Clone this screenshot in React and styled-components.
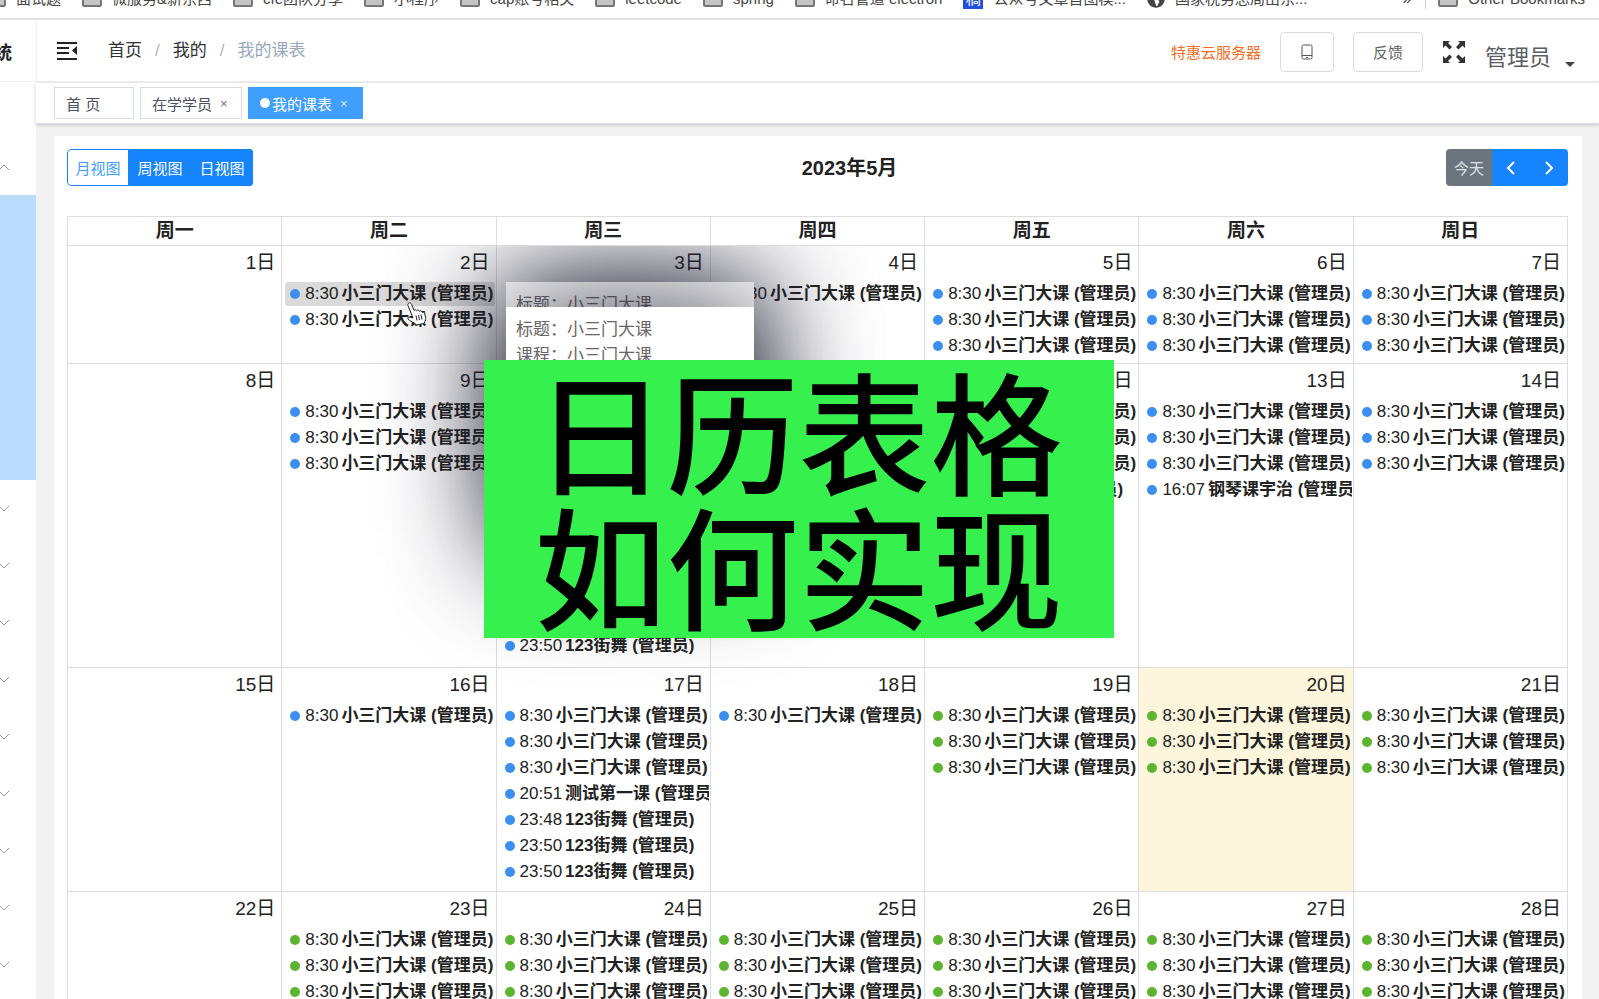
import React from 'react';
import styled, { createGlobalStyle, css } from 'styled-components';
import { FaGlobeAmericas } from 'react-icons/fa';

const SAN = { time: '8:30', title: '小三门大课 (管理员)' };
const PIANO = { time: '16:07', title: '钢琴课宇治 (管理员)' };
const TEST = { time: '20:51', title: '测试第一课 (管理员)' };
const DANCE48 = { time: '23:48', title: '123街舞 (管理员)' };
const DANCE50 = { time: '23:50', title: '123街舞 (管理员)' };

const THREE = [SAN, SAN, SAN];
const WED = [...THREE, TEST, DANCE48, DANCE50, DANCE50];

const weekdays = ['周一', '周二', '周三', '周四', '周五', '周六', '周日'];

const weeks = [
  {
    height: 118,
    start: 1,
    days: [[], [SAN, SAN], [], [SAN], THREE, THREE, THREE],
  },
  {
    height: 304,
    start: 8,
    days: [
      [],
      THREE,
      [...THREE, TEST, TEST, ...Array(2).fill(DANCE48), ...Array(3).fill(DANCE50)],
      [SAN],
      [...THREE, DANCE50],
      [...THREE, PIANO],
      THREE,
    ],
  },
  {
    height: 224,
    start: 15,
    days: [[], [SAN], WED, [SAN], THREE, THREE, THREE],
  },
  {
    height: 224,
    start: 22,
    days: [[], THREE, THREE, THREE, THREE, THREE, THREE],
  },
];

const TODAY = 20;
const FIRST_OPEN = 19;

const bookmarks = [
  '面试题',
  '微服务&新东西',
  'cfe团队分享',
  '小程序',
  'cap账号相关',
  'leetcode',
  'spring',
  '命名管道 electron',
];

const FoldIcon = () => (
  <svg width="20" height="20" viewBox="0 0 20 20" fill="#222">
    <path d="M0 1h20v2H0zM0 6h12v2H0zM0 11h12v2H0zM0 17h20v2H0zM20 5v9l-5-4.500z" />
  </svg>
);

const PhoneIcon = () => (
  <svg width="12" height="16" viewBox="0 0 12 16" fill="none" stroke="#555">
    <rect x="1" y="1" width="10" height="14" rx="1.500" />
    <path d="M1 11.500h10M5 13.500h2" />
  </svg>
);

const FullIcon = () => (
  <svg width="24" height="24" viewBox="0 0 24 24" fill="#333">
    <path d="M1 1h7L6 3l4 4-2.500 2.500-4-4L1 8z" />
    <path d="M23 1v7l-2.500-2.500-4 4L14 7l4-4-2-2z" />
    <path d="M1 23v-7l2.500 2.500 4-4L10 17l-4 4 2 2z" />
    <path d="M23 23h-7l2-2-4-4 2.500-2.500 4 4L23 16z" />
  </svg>
);

const ArrowIcon = ({ d }) => (
  <svg width="10" height="16" viewBox="0 0 10 16" fill="none" stroke="#fff" strokeWidth="2">
    <path d={d} />
  </svg>
);

const FoldChevron = ({ open }) => (
  <svg width="12" height="8" viewBox="0 0 12 8" fill="none" stroke="#999">
    <path d={open ? 'M1 7l5-5 5 5' : 'M1 1l5 5 5-5'} />
  </svg>
);

const HandCursor = () => (
  <svg width="20" height="24" viewBox="0 0 20 24" fill="#fff" stroke="#222" strokeLinejoin="round">
    <path d="M2 1c1.200-.5 2 .2 2.500 1.300L7 8.500c.8-1 2.200-.8 2.700.2 1-.9 2.300-.5 2.700.5 1.200-.7 2.600 0 3 1.200.9-.3 2 .1 2.300 1.200l.8 3.400c.3 2-.2 3.500-.8 5l-.7 1.500-8 1.500-1.500-2c-2-.8-4.500-2-6.500-4-.8-1.300.6-2.400 2-1.900l3 .9L1 3.500C.6 2.300 1 1.300 2 1z" />
    <path d="M9 13.500l1 5M11.500 13l1 5M14 12.500l1 5" />
  </svg>
);

const Day = ({ day, events }) => (
  <DayCell $today={day === TODAY}>
    <DayNumber href="#day">{day}日</DayNumber>
    <EventList>
      {events.map((ev, i) => (
        <li key={i}>
          <EventLink href="#event" $active={day === 2 && i === 0}>
            <Dot $open={day >= FIRST_OPEN} />
            <time>{ev.time}</time>
            <b>{ev.title}</b>
          </EventLink>
        </li>
      ))}
    </EventList>
  </DayCell>
);

const App = () => (
  <Page>
    <GlobalStyle />
    <BookmarkBar>
      {bookmarks.map(name => (
        <Bookmark href="#bookmark" key={name}>
          <FolderShape />
          {name}
        </Bookmark>
      ))}
      <Bookmark href="#bookmark">
        <BlueLogo>稿</BlueLogo>
        公众号文章首图模...
      </Bookmark>
      <Bookmark href="#bookmark">
        <FaGlobeAmericas size={18} />
        国家税务总局山东...
      </Bookmark>
      <BookmarkEnd>
        <span>»</span>
        <OtherBookmarks href="#bookmark">
          <FolderShape />
          Other Bookmarks
        </OtherBookmarks>
      </BookmarkEnd>
    </BookmarkBar>
    <Body>
      <Sidebar>
        <SideTitle>统</SideTitle>
        <SideItem $gap>
          <FoldChevron open />
        </SideItem>
        <SideActive />
        {Array.from({ length: 9 }, (_, i) => (
          <SideItem key={i}>
            <FoldChevron />
          </SideItem>
        ))}
      </Sidebar>
      <Main>
        <Header>
          <PlainButton aria-label="fold">
            <FoldIcon />
          </PlainButton>
          <Crumbs>
            <a href="#home">首页</a>
            <Slash>/</Slash>
            <a href="#mine">我的</a>
            <Slash>/</Slash>
            <Current>我的课表</Current>
          </Crumbs>
          <Tools>
            <Promo href="#cloud">特惠云服务器</Promo>
            <ToolButton $width={54} aria-label="phone">
              <PhoneIcon />
            </ToolButton>
            <ToolButton $width={70}>反馈</ToolButton>
            <PlainButton aria-label="fullscreen">
              <FullIcon />
            </PlainButton>
            <UserButton>
              管理员
              <Caret />
            </UserButton>
          </Tools>
        </Header>
        <Tabs>
          <Tab href="#home" $width={80}>
            首 页
          </Tab>
          <Tab href="#students" $width={102}>
            在学学员 <small>×</small>
          </Tab>
          <Tab href="#schedule" $width={115} $active>
            <TabDot />
            我的课表 <small>×</small>
          </Tab>
        </Tabs>
        <Content>
          <Card>
            <Toolbar>
              <Group>
                <ViewButton $active>月视图</ViewButton>
                <ViewButton>周视图</ViewButton>
                <ViewButton>日视图</ViewButton>
              </Group>
              <Title>2023年5月</Title>
              <Group>
                <TodayButton>今天</TodayButton>
                <NavButton aria-label="prev">
                  <ArrowIcon d="M8 2L2 8l6 6" />
                </NavButton>
                <NavButton aria-label="next">
                  <ArrowIcon d="M2 2l6 6-6 6" />
                </NavButton>
              </Group>
            </Toolbar>
            <CalendarWrap>
              <Calendar>
                <thead>
                  <tr>
                    {weekdays.map(name => (
                      <HeadCell key={name}>{name}</HeadCell>
                    ))}
                  </tr>
                </thead>
                <tbody>
                  {weeks.map(week => (
                    <WeekRow key={week.start} $height={week.height}>
                      {week.days.map((events, i) => (
                        <Day key={i} day={week.start + i} events={events} />
                      ))}
                    </WeekRow>
                  ))}
                </tbody>
              </Calendar>
              <PopLayer>
                <Popover $top={36}>
                  <p>标题：小三门大课</p>
                </Popover>
                <Popover $top={61}>
                  <p>标题：小三门大课</p>
                  <p>课程：小三门大课</p>
                </Popover>
              </PopLayer>
              <CursorSpot>
                <HandCursor />
              </CursorSpot>
            </CalendarWrap>
          </Card>
        </Content>
      </Main>
    </Body>
    <Banner>
      <div>日历表格</div>
      <div>如何实现</div>
    </Banner>
  </Page>
);

export default App;

const GlobalStyle = createGlobalStyle`
  * {
    box-sizing: border-box;
  }
  body {
    margin: 0;
    background: #f2f2f2;
    font-family: 'Liberation Sans', 'Noto Sans CJK SC', sans-serif;
    color: #222;
  }
  a {
    color: inherit;
    text-decoration: none;
  }
  button {
    font-family: inherit;
    padding: 0;
  }
`;

const Page = styled.div`
  position: relative;
  height: 100vh;
  overflow: hidden;
  display: flex;
  flex-direction: column;
`;

const BookmarkBar = styled.nav`
  flex: none;
  display: flex;
  align-items: flex-end;
  gap: 21px;
  height: 20px;
  padding-bottom: 9px;
  background: #fff;
  border-bottom: 2px solid #e2e2e2;
  overflow: hidden;
`;

const Bookmark = styled.a`
  flex: none;
  display: flex;
  align-items: center;
  gap: 10px;
  height: 20px;
  font-size: 15px;
  line-height: 20px;
  white-space: nowrap;
  color: #444;

  &:first-child {
    margin-left: -14px;
  }
`;

const FolderShape = styled.span`
  width: 20px;
  height: 16px;
  border: 2px solid #777;
  border-radius: 2px;
  background: #c4c4c4;
`;

const BlueLogo = styled.span`
  width: 20px;
  height: 20px;
  background: #2450e0;
  color: #fff;
  text-align: center;
`;

const BookmarkEnd = styled.div`
  margin-left: auto;
  flex: none;
  display: flex;
  align-items: center;
  gap: 14px;
  height: 20px;
  color: #444;
`;

const OtherBookmarks = styled(Bookmark)`
  padding: 0 14px 0 12px;
  border-left: 1px solid #ccc;
`;

const Body = styled.div`
  flex: 1;
  min-height: 0;
  display: flex;
`;

const Sidebar = styled.aside`
  flex: none;
  width: 36px;
  background: #fff;
  overflow: hidden;
`;

const SideTitle = styled.div`
  display: flex;
  align-items: center;
  height: 62px;
  margin-left: -6px;
  border-bottom: 1px solid #eee;
  font-size: 18px;
  font-weight: 700;
`;

const SideItem = styled.div`
  display: flex;
  align-items: center;
  height: 57px;
  margin-left: -2px;
  ${({ $gap }) =>
    $gap &&
    css`
      margin-top: 56px;
    `}
`;

const SideActive = styled.div`
  height: 285px;
  background: #badcff;
`;

const Main = styled.div`
  flex: 1;
  min-width: 0;
  display: flex;
  flex-direction: column;
`;

const Header = styled.header`
  flex: none;
  display: flex;
  align-items: center;
  height: 63px;
  padding: 0 24px 0 20px;
  background: #fff;
  border-left: 1px solid #eee;
  border-bottom: 2px solid #f2f2f2;
`;

const PlainButton = styled.button`
  display: flex;
  border: 0;
  background: none;
`;

const Crumbs = styled.nav`
  display: flex;
  align-items: center;
  gap: 13px;
  margin-left: 31px;
  font-size: 17px;
  line-height: 24px;
  color: #303133;
`;

const Slash = styled.span`
  color: #b0b4bc;
`;

const Current = styled.span`
  color: #97a8be;
`;

const Tools = styled.div`
  display: flex;
  align-items: center;
  gap: 19px;
  margin-left: auto;
  padding-top: 2px;
`;

const Promo = styled.a`
  font-size: 15px;
  color: #f56c22;
`;

const ToolButton = styled.button`
  display: flex;
  align-items: center;
  justify-content: center;
  width: ${({ $width }) => $width}px;
  height: 40px;
  border: 1px solid #d9dce2;
  border-radius: 4px;
  background: #fff;
  font-size: 15px;
  color: #606266;
`;

const UserButton = styled.button`
  display: flex;
  align-items: flex-end;
  gap: 14px;
  padding-top: 6px;
  border: 0;
  background: none;
  font-size: 22px;
  color: #5a5e66;
`;

const Caret = styled.span`
  margin-bottom: 4px;
  border: 5px solid transparent;
  border-top-color: #444;
  border-bottom: 0;
`;

const Tabs = styled.nav`
  flex: none;
  z-index: 1;
  display: flex;
  gap: 6px;
  height: 41px;
  padding: 4px 18px;
  background: #fff;
  border-bottom: 1px solid #d8dce5;
  box-shadow: 0 1px 4px rgba(0, 0, 40, 0.2);
`;

const Tab = styled.a`
  display: flex;
  align-items: center;
  width: ${({ $width }) => $width}px;
  height: 32px;
  padding-left: 11px;
  border: 1px solid #d8dce5;
  font-size: 15px;
  color: #495060;
  white-space: nowrap;

  small {
    margin-left: 8px;
    font-size: 13px;
    opacity: 0.8;
  }
  ${({ $active }) =>
    $active &&
    css`
      background: #409eff;
      border-color: #409eff;
      color: #fff;
    `}
`;

const TabDot = styled.span`
  width: 10px;
  height: 10px;
  margin-right: 2px;
  border-radius: 50%;
  background: #fff;
`;

const Content = styled.main`
  flex: 1;
  min-height: 0;
  padding: 12px 17px 0 18px;
`;

const Card = styled.section`
  height: 100%;
  padding: 13px 14px 0 13px;
  background: #fff;
`;

const Toolbar = styled.div`
  display: flex;
  justify-content: space-between;
  align-items: center;
  height: 37px;
  margin-bottom: 30px;
`;

const Group = styled.div`
  display: flex;
  height: 37px;
  border-radius: 4px;
  overflow: hidden;
`;

const ViewButton = styled.button`
  width: 62px;
  border: 1px solid #1684fc;
  background: #1684fc;
  color: #fff;
  font-size: 15px;
  ${({ $active }) =>
    $active &&
    css`
      border-radius: 4px 0 0 4px;
      background: #fff;
      color: #409eff;
    `}
`;

const TodayButton = styled.button`
  width: 46px;
  border: 0;
  background: #6c757d;
  color: #dfe2e5;
  font-size: 15px;
`;

const NavButton = styled.button`
  display: flex;
  align-items: center;
  justify-content: center;
  width: 38px;
  border: 0;
  background: #1684fc;
`;

const Title = styled.h2`
  margin: 0;
  font-size: 20px;
  line-height: 28px;
`;

const CalendarWrap = styled.div`
  position: relative;
`;

const Calendar = styled.table`
  width: 100%;
  table-layout: fixed;
  border-collapse: collapse;
`;

const HeadCell = styled.th`
  height: 29px;
  padding: 0;
  border: 1px solid #ddd;
  font-size: 19px;
  line-height: 28px;
`;

const WeekRow = styled.tr`
  height: ${({ $height }) => $height}px;
`;

const DayCell = styled.td`
  padding: 0 1px 0 3px;
  border: 1px solid #ddd;
  vertical-align: top;
  background: ${({ $today }) => ($today ? '#fdf6dc' : 'transparent')};
`;

const DayNumber = styled.a`
  display: block;
  padding: 4px 5px 0 0;
  font-size: 19px;
  line-height: 26px;
  text-align: right;
`;

const EventList = styled.ul`
  margin: 6px 0 0;
  padding: 0;
  list-style: none;
`;

const EventLink = styled.a`
  display: flex;
  align-items: center;
  gap: 3px;
  height: 24px;
  margin-bottom: 2px;
  padding-left: 5px;
  border-radius: 3px;
  overflow: hidden;
  font-size: 17px;
  line-height: 24px;
  white-space: nowrap;
  background: ${({ $active }) => ($active ? '#dadada' : 'transparent')};
`;

const Dot = styled.span`
  flex: none;
  width: 10px;
  height: 10px;
  margin-right: 2px;
  border-radius: 50%;
  background: ${({ $open }) => ($open ? '#5cb531' : '#3b8ff0')};
`;

// starts below the weekday row, so the popover shadow stops there
const PopLayer = styled.div`
  position: absolute;
  inset: 30px 0 0 0;
  overflow: hidden;
  pointer-events: none;
`;

const Popover = styled.div`
  position: absolute;
  top: ${({ $top }) => $top}px;
  left: 439px;
  width: 248px;
  height: 250px;
  padding: 10px;
  background: #fff;
  box-shadow: 0 0 110px rgba(30, 32, 50, 0.85);
  font-size: 17px;
  color: #666;

  p {
    margin: 0;
    line-height: 26px;
  }
`;

const CursorSpot = styled.div`
  position: absolute;
  top: 86px;
  left: 340px;
`;

const Banner = styled.div`
  position: absolute;
  top: 360px;
  left: 50%;
  width: 630px;
  margin-left: -316px;
  padding-bottom: 8px;
  background: #35f04d;
  color: #000;
  text-align: center;
  font-family: 'Noto Sans CJK SC', sans-serif;
  font-size: 132px;
  font-weight: 500;
  line-height: 135px;
`;
